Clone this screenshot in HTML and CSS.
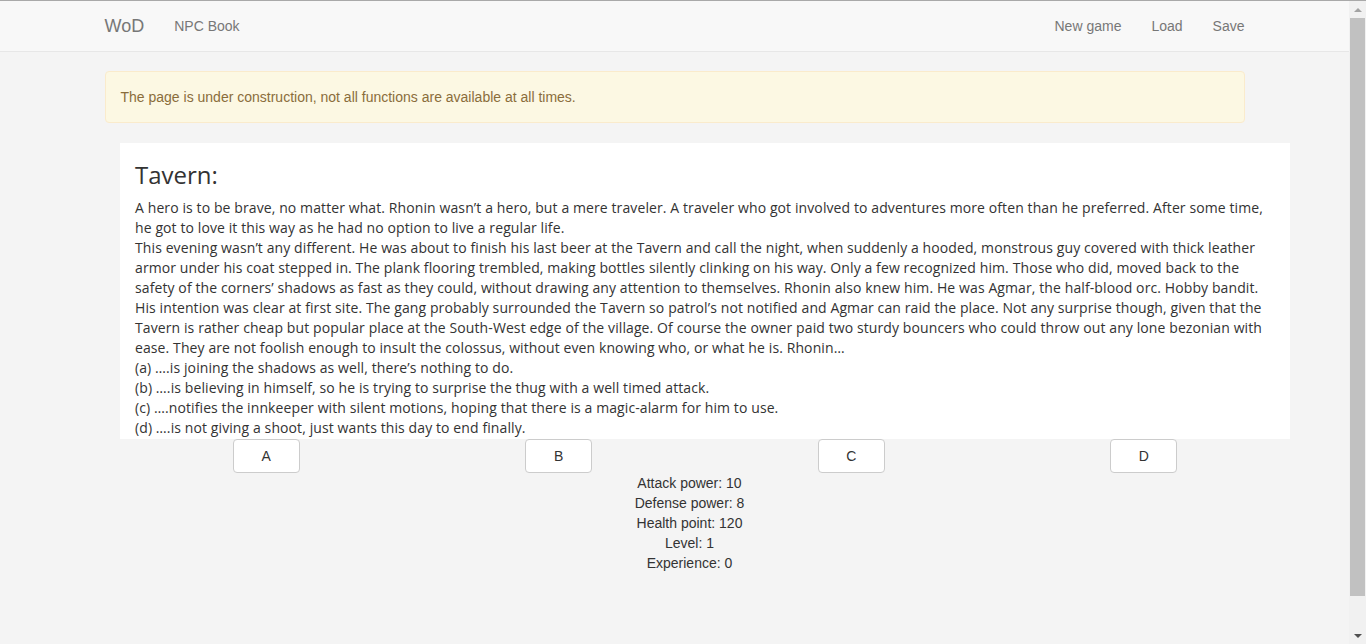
FILE: index.html
```html
<!DOCTYPE html>
<html>
<head>
<meta charset="utf-8">
<link rel="stylesheet" href="styles.css">
</head>
<body>
<div class="window">
  <div class="page">
    <nav class="navbar">
      <div class="container nav-inner">
        <div class="nav-left">
          <a class="brand">WoD</a>
          <a class="nav-link">NPC Book</a>
        </div>
        <div class="nav-right">
          <a class="nav-link">New game</a>
          <a class="nav-link">Load</a>
          <a class="nav-link">Save</a>
        </div>
      </div>
    </nav>
    <div class="container">
      <div class="alert">The page is under construction, not all functions are available at all times.</div>
    </div>
    <div class="story-wrap">
      <div class="story">
        <h3 class="story-title">Tavern:</h3>
        <p class="story-text">A hero is to be brave, no matter what. Rhonin wasn’t a hero, but a mere traveler. A traveler who got involved to adventures more often than he preferred. After some time, he got to love it this way as he had no option to live a regular life.<br>This evening wasn’t any different. He was about to finish his last beer at the Tavern and call the night, when suddenly a hooded, monstrous guy covered with thick leather armor under his coat stepped in. The plank flooring trembled, making bottles silently clinking on his way. Only a few recognized him. Those who did, moved back to the safety of the corners’ shadows as fast as they could, without drawing any attention to themselves. Rhonin also knew him. He was Agmar, the half-blood orc. Hobby bandit. His intention was clear at first site. The gang probably surrounded the Tavern so patrol’s not notified and Agmar can raid the place. Not any surprise though, given that the Tavern is rather cheap but popular place at the South-West edge of the village. Of course the owner paid two sturdy bouncers who could throw out any lone bezonian with ease. They are not foolish enough to insult the colossus, without even knowing who, or what he is. Rhonin…<br>(a) ….is joining the shadows as well, there’s nothing to do.<br>(b) ….is believing in himself, so he is trying to surprise the thug with a well timed attack.<br>(c) ….notifies the innkeeper with silent motions, hoping that there is a magic-alarm for him to use.<br>(d) ….is not giving a shoot, just wants this day to end finally.</p>
      </div>
      <div class="choices">
        <div class="choice"><button class="btn">A</button></div>
        <div class="choice"><button class="btn">B</button></div>
        <div class="choice"><button class="btn">C</button></div>
        <div class="choice"><button class="btn">D</button></div>
      </div>
    </div>
    <div class="container">
      <div class="stats">
        <div>Attack power: 10</div>
        <div>Defense power: 8</div>
        <div>Health point: 120</div>
        <div>Level: 1</div>
        <div>Experience: 0</div>
      </div>
    </div>
  </div>
  <div class="scrollbar">
    <div class="sb-arrow up"></div>
    <div class="sb-track"><div class="sb-thumb"></div></div>
    <div class="sb-arrow down"></div>
  </div>
</div>
</body>
</html>
```
FILE: styles.css
```css
html, body {
  margin: 0;
  padding: 0;
  height: 100%;
  overflow: hidden;
}
body {
  font-family: "Liberation Sans", Arial, sans-serif;
  font-size: 14px;
  line-height: 20px;
  color: #333;
  background: #f4f4f4;
}
.window {
  display: flex;
  height: 644px;
  border-top: 1px solid #a9a9a9;
  box-sizing: border-box;
}
.page {
  flex: 1;
  min-width: 0;
  background: #f4f4f4;
}
.container {
  width: 1170px;
  margin: 0 auto;
  padding: 0 15px;
  box-sizing: border-box;
}
.navbar {
  background: #f8f8f8;
  border-bottom: 1px solid #e7e7e7;
  height: 50px;
}
.nav-inner {
  display: flex;
  justify-content: space-between;
  height: 50px;
}
.nav-left, .nav-right {
  display: flex;
  align-items: center;
}
.brand {
  font-size: 18px;
  color: #777;
  padding: 15px 15px 15px 0;
  line-height: 20px;
}
.nav-link {
  color: #777;
  padding: 15px;
  line-height: 20px;
}
.nav-right .nav-link:last-child {
  padding-right: 0;
}
.alert {
  margin-top: 19px;
  padding: 15px;
  background: #fcf8e3;
  border: 1px solid #faebcc;
  border-radius: 4px;
  color: #8a6d3b;
}
.story-wrap {
  width: 1170px;
  margin: 20px 0 0 120px;
}
.story {
  background: #fff;
  padding: 0 15px 1px;
  overflow: hidden;
}
.story-title {
  font-family: "Open Sans", sans-serif;
  font-weight: 400;
  font-size: 24px;
  line-height: 26px;
  margin: 19px 0 10px;
  color: #333;
}
.story-text {
  font-family: "Open Sans", sans-serif;
  font-size: 14px;
  line-height: 20px;
  letter-spacing: 0.1px;
  margin: 0;
  color: #333;
}
.choices {
  display: grid;
  grid-template-columns: repeat(4, 1fr);
}
.choice {
  display: flex;
  justify-content: center;
}
.btn {
  width: 67px;
  height: 34px;
  background: #fff;
  border: 1px solid #ccc;
  border-radius: 4px;
  font-family: "Liberation Sans", Arial, sans-serif;
  font-size: 14px;
  color: #333;
  padding: 0;
}
.stats {
  text-align: center;
  padding-left: 30px;
}
.scrollbar {
  width: 17px;
  background: #f1f1f1;
  display: flex;
  flex-direction: column;
}
.sb-arrow {
  height: 17px;
  display: flex;
  align-items: center;
  justify-content: center;
}
.sb-arrow.up::before {
  content: "";
  border-left: 4px solid transparent;
  border-right: 4px solid transparent;
  border-bottom: 4px solid #a3a3a3;
}
.sb-arrow.down::before {
  content: "";
  border-left: 4px solid transparent;
  border-right: 4px solid transparent;
  border-top: 4px solid #505050;
}
.sb-track {
  flex: 1;
  padding: 0 1px;
}
.sb-thumb {
  height: 578px;
  background: #c1c1c1;
}
```
